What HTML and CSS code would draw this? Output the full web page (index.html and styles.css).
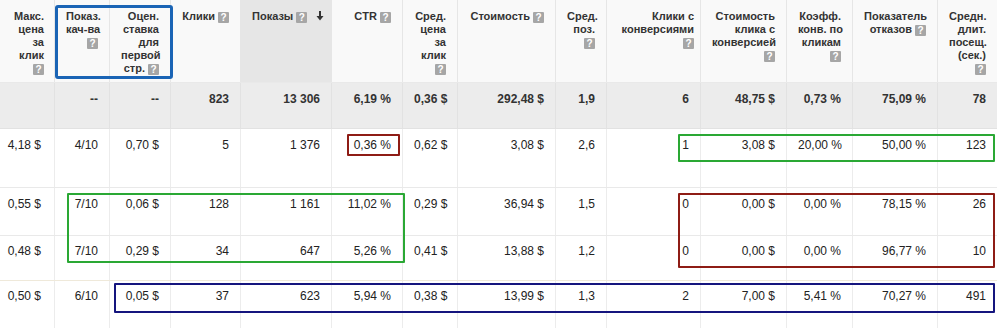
FILE: index.html
```html
<!DOCTYPE html>
<html lang="ru">
<head>
<meta charset="utf-8">
<title>Статистика</title>
<link rel="stylesheet" href="styles.css">
</head>
<body>
<div class="table">
  <div class="row head">
    <div class="c c1">Макс.<br>цена<br>за<br>клик<br><span class="q">?</span></div>
    <div class="c">Показ.<br>кач-ва<br><span class="q">?</span></div>
    <div class="c">Оцен.<br>ставка<br>для<br>первой<br>стр. <span class="q">?</span></div>
    <div class="c">Клики <span class="q">?</span></div>
    <div class="c sorted">Показы <span class="q">?</span><svg class="arrow" width="8" height="10" viewBox="0 0 8 10"><path d="M4 0V6" stroke="#333" stroke-width="2"/><path d="M0.5 5H7.5L4 9.5Z" fill="#333"/></svg></div>
    <div class="c">CTR <span class="q">?</span></div>
    <div class="c">Сред.<br>цена<br>за<br>клик<br><span class="q">?</span></div>
    <div class="c">Стоимость <span class="q">?</span></div>
    <div class="c">Сред.<br>поз.<br><span class="q">?</span></div>
    <div class="c c10">Клики с<br>конверсиями<br><span class="q">?</span></div>
    <div class="c">Стоимость<br>клика с<br>конверсией<br><span class="q">?</span></div>
    <div class="c">Коэфф.<br>конв. по<br>кликам<br><span class="q">?</span></div>
    <div class="c">Показатель<br>отказов <span class="q">?</span></div>
    <div class="c">Средн.<br>длит.<br>посещ.<br>(сек.)<br><span class="q">?</span></div>
  </div>
  <div class="row total">
    <div class="c c1"></div><div class="c">--</div><div class="c">--</div><div class="c">823</div><div class="c">13 306</div><div class="c">6,19 %</div><div class="c">0,36 $</div><div class="c">292,48 $</div><div class="c">1,9</div><div class="c">6</div><div class="c">48,75 $</div><div class="c">0,73 %</div><div class="c">75,09 %</div><div class="c">78</div>
  </div>
  <div class="row r1">
    <div class="c c1">4,18 $</div><div class="c">4/10</div><div class="c">0,70 $</div><div class="c">5</div><div class="c">1 376</div><div class="c">0,36 %</div><div class="c">0,62 $</div><div class="c">3,08 $</div><div class="c">2,6</div><div class="c">1</div><div class="c">3,08 $</div><div class="c">20,00 %</div><div class="c">50,00 %</div><div class="c">123</div>
  </div>
  <div class="row r2">
    <div class="c c1">0,55 $</div><div class="c">7/10</div><div class="c">0,06 $</div><div class="c">128</div><div class="c">1 161</div><div class="c">11,02 %</div><div class="c">0,29 $</div><div class="c">36,94 $</div><div class="c">1,5</div><div class="c">0</div><div class="c">0,00 $</div><div class="c">0,00 %</div><div class="c">78,15 %</div><div class="c">26</div>
  </div>
  <div class="row r3">
    <div class="c c1">0,48 $</div><div class="c">7/10</div><div class="c">0,29 $</div><div class="c">34</div><div class="c">647</div><div class="c">5,26 %</div><div class="c">0,41 $</div><div class="c">13,88 $</div><div class="c">1,2</div><div class="c">0</div><div class="c">0,00 $</div><div class="c">0,00 %</div><div class="c">96,77 %</div><div class="c">10</div>
  </div>
  <div class="row r4">
    <div class="c c1">0,50 $</div><div class="c">6/10</div><div class="c">0,05 $</div><div class="c">37</div><div class="c">623</div><div class="c">5,94 %</div><div class="c">0,38 $</div><div class="c">13,99 $</div><div class="c">1,3</div><div class="c">2</div><div class="c">7,00 $</div><div class="c">5,41 %</div><div class="c">70,27 %</div><div class="c">491</div>
  </div>

  <div class="mark blue"></div>
  <div class="mark red red-ctr"></div>
  <div class="mark green green-r1"></div>
  <div class="mark green green-left"></div>
  <div class="mark red red-right"></div>
  <div class="mark navy"></div>
</div>
</body>
</html>
```

FILE: styles.css
```css
html, body {
  margin: 0;
  padding: 0;
  background: #fff;
}
body {
  font-family: "Liberation Sans", Arial, Helvetica, sans-serif;
  color: #222;
  width: 997px;
  height: 328px;
  overflow: hidden;
}
.table {
  position: relative;
  width: 997px;
}
.row {
  display: grid;
  grid-template-columns: 55px 55px 61px 70px 91px 71px 55px 98px 51px 94px 86px 66px 85px 59px;
  border-bottom: 1px solid #e9e9e9;
  box-sizing: border-box;
}
.c {
  border-right: 1px solid #ececec;
  padding: 9px 11px 0 11px;
  text-align: right;
  white-space: nowrap;
  font-size: 12px;
  line-height: 15px;
  box-sizing: border-box;
}
.c:last-child {
  border-right: none;
}
.c1 {
  padding-right: 13px;
  padding-left: 6px;
}
.head {
  height: 83px;
  background: #f9f9f9;
}
.head .c {
  font-size: 11px;
  font-weight: bold;
  color: #333;
  line-height: 13px;
  padding-top: 10px;
  border-right-color: #e6e6e6;
}
.head .c1 {
  padding-right: 10px;
}
.head .c10 {
  padding-right: 6px;
  padding-left: 8px;
}
.head .sorted {
  background: #e6e6e6;
  padding-right: 8px;
}
.arrow {
  margin-left: 9px;
  vertical-align: -1px;
}
.q {
  display: inline-block;
  width: 11px;
  height: 11px;
  background: #a6a6a6;
  color: #fff;
  font-size: 10px;
  font-weight: bold;
  line-height: 11px;
  text-align: center;
  border-radius: 1px;
  vertical-align: -1px;
}
.total {
  height: 46px;
  background: #ececec;
  border-bottom-color: #e2e2e2;
}
.total .c {
  font-weight: bold;
  color: #333;
  border-right-color: #e2e2e2;
}
.r1 { height: 59px; }
.r2 { height: 48px; }
.r3 { height: 45px; border-bottom-color: #efe9da; }
.r3 .c, .r4 .c { padding-top: 8px; }
.r4 { height: 47px; border-bottom: none; }

.mark {
  position: absolute;
  box-sizing: border-box;
  border: 2px solid;
  border-radius: 1px;
}
.blue {
  left: 55px; top: 5px; width: 118px; height: 74px;
  border: 3px solid #1a64b5;
  border-radius: 3px;
}
.red { border-color: #8e1c15; }
.green { border-color: #2aa834; }
.navy {
  border-color: #15157e;
  left: 114px; top: 283px; width: 881px; height: 30px;
}
.red-ctr { left: 347px; top: 134px; width: 53px; height: 22px; }
.green-r1 { left: 678px; top: 134px; width: 317px; height: 28px; }
.green-left { left: 67px; top: 193px; width: 338px; height: 70px; }
.red-right { left: 678px; top: 193px; width: 317px; height: 75px; }
```
